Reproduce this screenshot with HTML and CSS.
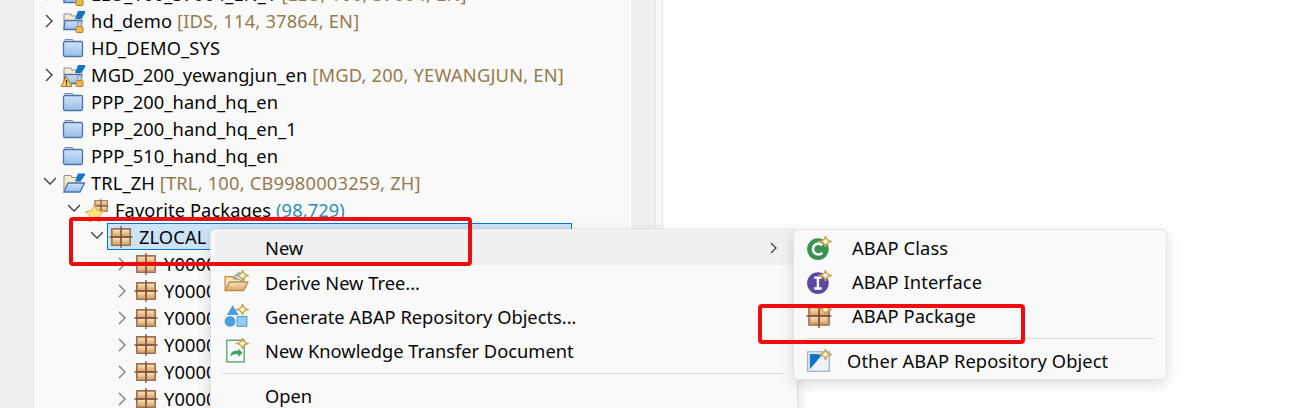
FILE: index.html
```html
<!DOCTYPE html>
<html lang="en">
<head>
    <meta charset="UTF-8">
    <title>ABAP Project Explorer</title>
    <link rel="stylesheet" href="styles.css">
</head>
<body>
    <svg class="icon-defs" width="0" height="0">
        <defs>
            <linearGradient id="folderBlue" x1="0" y1="0" x2="0" y2="1">
                <stop offset="0" stop-color="#cfe2f7"/>
                <stop offset="1" stop-color="#97bfe9"/>
            </linearGradient>
            <linearGradient id="tan" x1="0" y1="0" x2="0" y2="1">
                <stop offset="0" stop-color="#f6e2b8"/>
                <stop offset="1" stop-color="#d6a868"/>
            </linearGradient>
            <symbol id="i-folder" viewBox="0 0 24 24">
                <path d="M4 6V3.500h7.500L12.500 6" fill="#ececec" stroke="#7b8aa0"/>
                <rect x="2.500" y="5.500" width="19" height="15" rx="1.500" fill="url(#folderBlue)" stroke="#4e73ab" stroke-width="1.300"/>
            </symbol>
            <symbol id="i-open" viewBox="0 0 24 24">
                <path d="M3 21V4.500h7l1 2h8V11" fill="#f8ebcb" stroke="#8b8f9c"/>
                <path d="M3 21l4-9h16.500L19 21z" fill="url(#folderBlue)" stroke="#4e73ab" stroke-width="1.300"/>
                <path d="M14 10.500l3-8h7v1.500l-4.500 6.500z" fill="#0f76c5"/>
            </symbol>
            <symbol id="i-project" viewBox="0 0 24 24">
                <path d="M3 21V5h7l1 2h7v4" fill="#f8ebcb" stroke="#8b8f9c"/>
                <path d="M3 20.500l1-9h17l-1 9z" fill="url(#folderBlue)" stroke="#4e73ab" stroke-width="1.300"/>
                <path d="M14 10l3-8h7v2l-3.500 6z" fill="#0f76c5"/>
                <rect x="15" y="17.500" width="7" height="6" rx="1" fill="#efb952" stroke="#b57c22"/>
                <path d="M16.500 17.500V14.500a2 2 0 0 1 4 0V17.500" fill="none" stroke="#a8a8a8" stroke-width="1.300"/>
            </symbol>
            <symbol id="i-warn" viewBox="0 0 24 24">
                <path d="M5.500 13.500L11 23.500H0z" fill="#f7cf5c" stroke="#a97c1f"/>
                <path d="M5.500 17v3.500M5.500 21.300v1.200" stroke="#222" stroke-width="1.200"/>
            </symbol>
            <symbol id="i-package" viewBox="0 0 24 24">
                <rect x="2.500" y="3.500" width="19" height="17" fill="#b98b68" stroke="#a06f52"/>
                <rect x="4" y="5" width="7" height="6" fill="url(#tan)"/>
                <rect x="13" y="5" width="7" height="6" fill="url(#tan)"/>
                <rect x="4" y="13" width="7" height="6" fill="url(#tan)"/>
                <rect x="13" y="13" width="7" height="6" fill="url(#tan)"/>
                <path d="M12 1v22M0.500 12h23" stroke="#7d4d3a" stroke-width="1.300"/>
            </symbol>
            <symbol id="i-favorite" viewBox="0 0 24 24">
                <use href="#i-package" x="8" y="0" width="16" height="16"/>
                <path d="M9.500 7l2.900 5.800 6.300.9-4.600 4.400 1.100 6.300-5.700-3-5.700 3 1.100-6.300L.3 13.700l6.300-.9z" fill="#ffe47e" stroke="#d9ae45"/>
            </symbol>
            <symbol id="i-spark" viewBox="0 0 24 24">
                <path d="M18 1c.5 3 1.500 4 5 5-3.500 1-4.500 2-5 5-.5-3-1.500-4-5-5 3.500-1 4.500-2 5-5z" fill="#fff8d8" stroke="#c9a24a" stroke-width="1.400"/>
            </symbol>
            <symbol id="i-derive" viewBox="0 0 24 24">
                <path d="M2 20V7h7l1 2h9v3" fill="#f8e6bd" stroke="#c08a45" stroke-width="1.200"/>
                <path d="M2 20l4-8h17l-4 8z" fill="url(#tan)" stroke="#c08a45" stroke-width="1.200"/>
                <path d="M10 7l5-4 5 6-3 2z" fill="#d5e6f7" stroke="#7ba7d4"/>
            </symbol>
            <symbol id="i-generate" viewBox="0 0 24 24">
                <path d="M9 2l5.500 9h-11z" fill="#4a9fe0"/>
                <circle cx="6.500" cy="17" r="5" fill="#4a9fe0"/>
                <rect x="13" y="12.500" width="9" height="9" fill="#9ccbf0" stroke="#4a9fe0"/>
            </symbol>
            <symbol id="i-doc" viewBox="0 0 24 24">
                <rect x="3.500" y="3" width="16" height="20" fill="#fdfdfd" stroke="#5aa873" stroke-width="1.300"/>
                <path d="M7 18c0-4 3-6 7-5v-2.500l4 4-4 4V16c-3-1-5 0-7 2z" fill="#33a65b"/>
            </symbol>
            <symbol id="i-class" viewBox="0 0 24 24">
                <circle cx="11" cy="13" r="10" fill="#3b9152"/>
                <path d="M15 9.500a5 5 0 1 0 0 7" fill="none" stroke="#fff" stroke-width="2.400"/>
            </symbol>
            <symbol id="i-interface" viewBox="0 0 24 24">
                <circle cx="11" cy="13" r="10" fill="#5b4a9e"/>
                <path d="M7.500 8h7M11 8v10M7.500 18h7" fill="none" stroke="#fff" stroke-width="2.200"/>
            </symbol>
            <symbol id="i-other" viewBox="0 0 24 24">
                <rect x="1.500" y="3.500" width="20" height="18" fill="#eef3f9" stroke="#9db4cf" stroke-width="1.200"/>
                <path d="M3.500 5.500h12L3.500 19.500z" fill="#0f76c5"/>
            </symbol>
        </defs>
    </svg>

    <div class="workbench">
        <div class="gutter-left"></div>
        <div class="explorer">
            <div class="tree">
                <div class="row level-0">
                    <span class="twist"><svg class="chev"><polyline points="2,1 8,7 2,13"/></svg></span>
                    <svg class="icon"><use href="#i-project"/></svg>
                    <span class="label">LLO_100_37004_EN_1 <span class="deco">[LLO, 100, 37004, EN]</span></span>
                </div>
                <div class="row level-0">
                    <span class="twist"><svg class="chev"><polyline points="2,1 8,7 2,13"/></svg></span>
                    <svg class="icon"><use href="#i-project"/></svg>
                    <span class="label">hd_demo <span class="deco">[IDS, 114, 37864, EN]</span></span>
                </div>
                <div class="row level-0">
                    <span class="twist"></span>
                    <svg class="icon"><use href="#i-folder"/></svg>
                    <span class="label">HD_DEMO_SYS</span>
                </div>
                <div class="row level-0">
                    <span class="twist"><svg class="chev"><polyline points="2,1 8,7 2,13"/></svg></span>
                    <svg class="icon"><use href="#i-project"/><use href="#i-warn"/></svg>
                    <span class="label">MGD_200_yewangjun_en <span class="deco">[MGD, 200, YEWANGJUN, EN]</span></span>
                </div>
                <div class="row level-0">
                    <span class="twist"></span>
                    <svg class="icon"><use href="#i-folder"/></svg>
                    <span class="label">PPP_200_hand_hq_en</span>
                </div>
                <div class="row level-0">
                    <span class="twist"></span>
                    <svg class="icon"><use href="#i-folder"/></svg>
                    <span class="label">PPP_200_hand_hq_en_1</span>
                </div>
                <div class="row level-0">
                    <span class="twist"></span>
                    <svg class="icon"><use href="#i-folder"/></svg>
                    <span class="label">PPP_510_hand_hq_en</span>
                </div>
                <div class="row level-0">
                    <span class="twist"><svg class="chev"><polyline points="0,2 6,8 12,2"/></svg></span>
                    <svg class="icon"><use href="#i-open"/></svg>
                    <span class="label">TRL_ZH <span class="deco">[TRL, 100, CB9980003259, ZH]</span></span>
                </div>
                <div class="row level-1">
                    <span class="twist"><svg class="chev"><polyline points="0,2 6,8 12,2"/></svg></span>
                    <svg class="icon"><use href="#i-favorite"/></svg>
                    <span class="label">Favorite Packages <span class="count">(98,729)</span></span>
                </div>
                <div class="row level-2">
                    <span class="twist"><svg class="chev"><polyline points="0,2 6,8 12,2"/></svg></span>
                    <div class="selected">
                        <svg class="icon"><use href="#i-package"/></svg>
                        <span class="label">ZLOCAL</span>
                    </div>
                </div>
                <div class="row level-3">
                    <span class="twist"><svg class="chev"><polyline points="2,1 8,7 2,13"/></svg></span>
                    <svg class="icon"><use href="#i-package"/></svg>
                    <span class="label">Y00001</span>
                </div>
                <div class="row level-3">
                    <span class="twist"><svg class="chev"><polyline points="2,1 8,7 2,13"/></svg></span>
                    <svg class="icon"><use href="#i-package"/></svg>
                    <span class="label">Y00002</span>
                </div>
                <div class="row level-3">
                    <span class="twist"><svg class="chev"><polyline points="2,1 8,7 2,13"/></svg></span>
                    <svg class="icon"><use href="#i-package"/></svg>
                    <span class="label">Y00003</span>
                </div>
                <div class="row level-3">
                    <span class="twist"><svg class="chev"><polyline points="2,1 8,7 2,13"/></svg></span>
                    <svg class="icon"><use href="#i-package"/></svg>
                    <span class="label">Y00004</span>
                </div>
                <div class="row level-3">
                    <span class="twist"><svg class="chev"><polyline points="2,1 8,7 2,13"/></svg></span>
                    <svg class="icon"><use href="#i-package"/></svg>
                    <span class="label">Y00005</span>
                </div>
                <div class="row level-3">
                    <span class="twist"><svg class="chev"><polyline points="2,1 8,7 2,13"/></svg></span>
                    <svg class="icon"><use href="#i-package"/></svg>
                    <span class="label">Y00006</span>
                </div>
            </div>
        </div>
        <div class="gutter-mid"></div>
        <div class="gutter-thin"></div>
        <div class="editor"></div>
    </div>

    <div class="menu context-menu">
        <div class="menu-item active">
            <span class="menu-icon"></span>
            <span class="menu-text">New</span>
            <svg class="submenu-arrow"><polyline points="1,1 6,6 1,11"/></svg>
        </div>
        <div class="menu-item">
            <svg class="menu-icon"><use href="#i-derive"/><use href="#i-spark"/></svg>
            <span class="menu-text">Derive New Tree...</span>
        </div>
        <div class="menu-item">
            <svg class="menu-icon"><use href="#i-generate"/><use href="#i-spark"/></svg>
            <span class="menu-text">Generate ABAP Repository Objects...</span>
        </div>
        <div class="menu-item">
            <svg class="menu-icon"><use href="#i-doc"/><use href="#i-spark"/></svg>
            <span class="menu-text">New Knowledge Transfer Document</span>
        </div>
        <div class="menu-sep"></div>
        <div class="menu-item">
            <span class="menu-icon"></span>
            <span class="menu-text">Open</span>
        </div>
    </div>

    <div class="menu sub-menu">
        <div class="menu-item">
            <svg class="menu-icon"><use href="#i-class"/><use href="#i-spark"/></svg>
            <span class="menu-text">ABAP Class</span>
        </div>
        <div class="menu-item">
            <svg class="menu-icon"><use href="#i-interface"/><use href="#i-spark"/></svg>
            <span class="menu-text">ABAP Interface</span>
        </div>
        <div class="menu-item">
            <svg class="menu-icon"><use href="#i-package"/><use href="#i-spark"/></svg>
            <span class="menu-text">ABAP Package</span>
        </div>
        <div class="menu-sep"></div>
        <div class="menu-item other">
            <svg class="menu-icon"><use href="#i-other"/><use href="#i-spark"/></svg>
            <span class="menu-text">Other ABAP Repository Object</span>
        </div>
    </div>

    <div class="callout callout-new"></div>
    <div class="callout callout-package"></div>
</body>
</html>
```

FILE: styles.css
```css
html, body {
    margin: 0;
    height: 408px;
    overflow: hidden;
}
body {
    position: relative;
    font-family: "Noto Sans", Arial, sans-serif;
    font-size: 18.3px;
    color: #080808;
    background-color: #f0f0f0;
}
.icon-defs {
    display: block;
    height: 0;
}
.workbench {
    display: flex;
    height: 408px;
}
.gutter-left {
    width: 33px;
    flex: none;
}
.explorer {
    width: 595px;
    flex: none;
    overflow: hidden;
    background-color: #f9f9f9;
    border-left: 1px solid #e8e8e8;
    border-right: 2px solid #fff;
}
.gutter-mid {
    width: 24px;
    flex: none;
    border-right: 1px solid #e6e6e6;
}
.gutter-thin {
    width: 6px;
    flex: none;
    background-color: #f6f6f6;
    border-right: 1px solid #e6e6e6;
}
.editor {
    flex: 1;
    background-color: #fff;
}

/* tree */
.tree {
    margin-top: -20px;
}
.row {
    display: flex;
    align-items: center;
    height: 27px;
    white-space: nowrap;
}
.level-0 { padding-left: 6px; }
.level-1 { padding-left: 30px; }
.level-2 { padding-left: 53px; }
.level-3 { padding-left: 79px; }
.twist {
    display: flex;
    justify-content: center;
    align-items: center;
    width: 20px;
    height: 16px;
    flex: none;
}
.chev {
    width: 12px;
    height: 14px;
}
.chev polyline {
    fill: none;
    stroke: #444;
    stroke-width: 1.4;
}
.level-3 .chev polyline {
    stroke: #808080;
}
.icon {
    width: 24px;
    height: 24px;
    flex: none;
    margin-left: 1px;
}
.label {
    margin-left: 6px;
    letter-spacing: 0.1px;
}
.deco {
    color: #957b4e;
    letter-spacing: 0.2px;
}
.count {
    color: #2a8cbf;
}
.selected {
    display: flex;
    align-items: center;
    width: 465px;
    height: 27px;
    box-sizing: border-box;
    background-color: #cce4f7;
    border: 1px solid #0078d7;
}

/* popup menus */
.menu {
    position: absolute;
    box-sizing: border-box;
    padding: 1px 4px;
    background-color: #f9f9f9;
    border: 1px solid #e4e4e4;
    border-radius: 6px;
    box-shadow: 0 4px 14px rgba(0, 0, 0, 0.14);
}
.context-menu {
    left: 210px;
    top: 229px;
    width: 588px;
    height: 240px;
}
.sub-menu {
    left: 793px;
    top: 229px;
    width: 374px;
    height: 151px;
}
.menu-item {
    display: flex;
    align-items: center;
    height: 34px;
    position: relative;
    border-radius: 4px;
    padding-left: 8px;
    white-space: nowrap;
}
.menu-item.active {
    background-color: #f0f0f0;
}
.menu-icon {
    width: 26px;
    height: 26px;
    flex: none;
}
.menu-text {
    margin-left: 16px;
}
.active .menu-text {
    padding-bottom: 2px;
}
.sub-menu .menu-text {
    margin-left: 20px;
    padding-bottom: 2px;
    letter-spacing: 0.1px;
}
.sub-menu .other .menu-text {
    margin-left: 15px;
}
.submenu-arrow {
    width: 8px;
    height: 12px;
    position: absolute;
    right: 15px;
    top: 11px;
}
.submenu-arrow polyline {
    fill: none;
    stroke: #444;
    stroke-width: 1.3;
}
.menu-sep {
    height: 1px;
    margin: 5px 8px;
    background-color: #dcdcdc;
}
.context-menu .menu-sep {
    margin: 6px 8px 4px;
}

/* red callouts drawn over the screenshot */
.callout {
    position: absolute;
    box-sizing: border-box;
    border: 4px solid #f00c0c;
    border-radius: 4px;
}
.callout-new {
    left: 69px;
    top: 217px;
    width: 403px;
    height: 49px;
}
.callout-package {
    left: 758px;
    top: 304px;
    width: 267px;
    height: 40px;
}
```
